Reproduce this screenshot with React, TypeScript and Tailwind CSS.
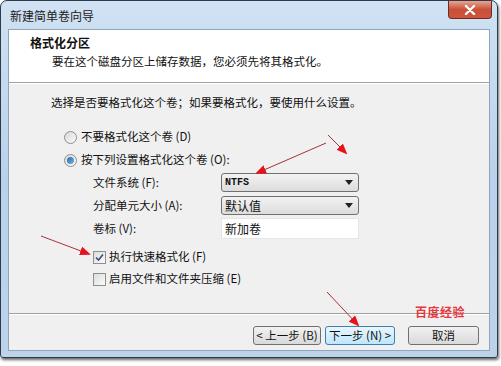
import React from 'react';

const font = { fontFamily: '"Noto Sans CJK SC", "Liberation Sans", sans-serif' };

const Radio: React.FC<{ checked?: boolean; label: string }> = ({ checked, label }) => (
  <div className="flex items-center h-[20px]">
    <span className="w-[13px] h-[13px] rounded-full border border-[#8e8f8f] bg-gradient-to-br from-[#d8d8d8] to-[#fbfbfb] flex items-center justify-center">
      {checked && <span className="w-[7px] h-[7px] rounded-full bg-gradient-to-br from-[#2c62a8] to-[#76b3e6]" />}
    </span>
    <span className="ml-[4px] text-[11.5px] text-[#111]">{label}</span>
  </div>
);

const Check: React.FC<{ checked?: boolean; label: string }> = ({ checked, label }) => (
  <div className="flex items-center h-[20px]">
    <span className="w-[13px] h-[13px] border border-[#8e8f8f] bg-gradient-to-br from-[#dcdcdc] to-[#fbfbfb] flex items-center justify-center">
      {checked && (
        <svg width="9" height="9" viewBox="0 0 9 9">
          <path d="M1 4.5 L3.5 7 L8 1.5" fill="none" stroke="#3a4f7a" strokeWidth="1.6" />
        </svg>
      )}
    </span>
    <span className="ml-[3px] text-[11.5px] text-[#111]">{label}</span>
  </div>
);

const Select: React.FC<{ value: string; mono?: boolean }> = ({ value, mono }) => (
  <div className="w-[138px] h-[19px] rounded-[3px] border border-[#707070] bg-gradient-to-b from-[#f3f3f3] to-[#dcdcdc] flex items-center justify-between px-[3px]">
    <span
      className={mono ? 'text-[10px] font-bold text-[#111]' : 'text-[12px] text-[#111]'}
      style={mono ? { fontFamily: '"Liberation Mono", monospace' } : undefined}
    >
      {value}
    </span>
    <svg width="8" height="5" viewBox="0 0 8 5" className="mr-[2px]">
      <path d="M0 0 H8 L4 5 Z" fill="#222" />
    </svg>
  </div>
);

const Button: React.FC<{ label: string; focused?: boolean; w: string }> = ({ label, focused, w }) => (
  <div
    className={`${w} h-[19px] rounded-[3px] border flex items-center justify-center text-[11.5px] text-[#111] ${
      focused
        ? 'border-[#3c7fb1] bg-gradient-to-b from-[#eaf6fd] to-[#bee6fd]'
        : 'border-[#707070] bg-gradient-to-b from-[#f2f2f2] to-[#d9d9d9]'
    }`}
  >
    {label}
  </div>
);

// red annotation arrows drawn over the dialog
const Arrows: React.FC = () => (
  <svg className="absolute inset-0 pointer-events-none" width="501" height="366">
    <defs>
      <marker id="head" markerWidth="11" markerHeight="9" refX="9" refY="4.5" orient="auto" markerUnits="userSpaceOnUse">
        <path d="M0 0 L11 4.5 L0 9 Z" fill="#e8121d" />
      </marker>
    </defs>
    <g stroke="#a8303a" strokeWidth="1" fill="none">
      <line x1="326" y1="143" x2="257" y2="173" markerEnd="url(#head)" />
      <line x1="328" y1="135" x2="346" y2="153" markerEnd="url(#head)" />
      <line x1="41" y1="236" x2="89" y2="254" markerEnd="url(#head)" />
      <line x1="327" y1="292" x2="358" y2="325" markerEnd="url(#head)" />
    </g>
  </svg>
);

const App: React.FC = () => {
  return (
    <div className="relative w-[501px] h-[366px] bg-white overflow-hidden" style={font}>
      <div className="w-[498px] h-[358px] rounded-t-[7px] rounded-b-[3px] border border-[#2d3a4a] bg-gradient-to-b from-[#d0e2f3] via-[#b9d1ea] to-[#bcd3eb] flex flex-col shadow-[1px_2px_3px_rgba(0,0,0,0.6)]">
        {/* title bar */}
        <div className="h-[28px] flex items-start justify-between pl-[9px] pr-[5px]">
          <span className="mt-[6px] text-[12px] text-[#1a1a1a]">新建简单卷向导</span>
          <div className="w-[44px] h-[18px] rounded-b-[4px] border border-t-0 border-[#6b2d22] bg-gradient-to-b from-[#e8a493] via-[#c75039] to-[#d2553b] flex items-center justify-center">
            <svg width="12" height="10" viewBox="0 0 12 10">
              <path d="M2 1 L10 9 M10 1 L2 9" stroke="#fff" strokeWidth="2.4" strokeLinecap="round" />
            </svg>
          </div>
        </div>

        {/* client area */}
        <div className="mx-[7px] mb-[6px] flex-1 border border-[#8fa5bd] bg-[#f0f0f0] flex flex-col">
          <div className="h-[53px] bg-white pl-[21px] pt-[5px] border-b border-[#a0a0a0]">
            <div className="text-[12px] font-bold text-[#111] leading-[16px]">格式化分区</div>
            <div className="ml-[22px] mt-[2px] text-[11.5px] text-[#111] leading-[16px]">
              要在这个磁盘分区上储存数据，您必须先将其格式化。
            </div>
          </div>
          <div className="h-px bg-white" />

          <div className="flex-1 flex flex-col pl-[42px] pt-[10px]">
            <div className="text-[11.5px] text-[#111] leading-[16px]">选择是否要格式化这个卷；如果要格式化，要使用什么设置。</div>

            <div className="ml-[13px] mt-[17px] flex flex-col gap-[3px]">
              <Radio label="不要格式化这个卷 (D)" />
              <Radio checked label="按下列设置格式化这个卷 (O):" />
            </div>

            <div className="ml-[42px] mt-[3px] flex flex-col">
              <div className="flex items-center h-[19px]">
                <span className="w-[128px] text-[11.5px] text-[#111]">文件系统 (F):</span>
                <Select value="NTFS" mono />
              </div>
              <div className="flex items-center h-[19px] mt-[4px]">
                <span className="w-[128px] text-[11.5px] text-[#111]">分配单元大小 (A):</span>
                <Select value="默认值" />
              </div>
              <div className="flex items-center h-[21px] mt-[3px]">
                <span className="w-[128px] text-[11.5px] text-[#111]">卷标 (V):</span>
                <div className="w-[138px] h-[21px] bg-white border border-[#e6e6e6] flex items-center px-[3px] text-[12px] text-[#111]">
                  新加卷
                </div>
              </div>
            </div>

            <div className="ml-[42px] mt-[8px] flex flex-col gap-[2px]">
              <Check checked label="执行快速格式化 (F)" />
              <Check label="启用文件和文件夹压缩 (E)" />
            </div>
          </div>

          <div className="h-px bg-[#a0a0a0]" />
          <div className="h-px bg-white" />
          <div className="h-[35px] flex items-start justify-end pr-[10px] pt-[11px]">
            <Button w="w-[68px]" label="< 上一步 (B)" />
            <div className="ml-[4px]">
              <Button w="w-[70px]" focused label="下一步 (N) >" />
            </div>
            <div className="ml-[13px]">
              <Button w="w-[71px]" label="取消" />
            </div>
          </div>
        </div>
      </div>

      <span className="absolute left-[415px] top-[303px] text-[12px] text-[#e8343c] font-bold tracking-[0.5px]">百度经验</span>
      <Arrows />
    </div>
  );
};

export default App;
